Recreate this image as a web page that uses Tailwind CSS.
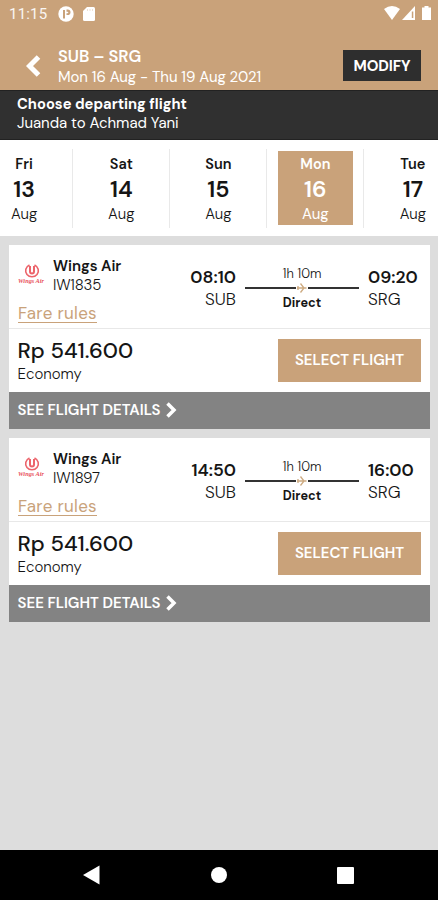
<!DOCTYPE html>
<html lang="en">
<head>
<meta charset="utf-8">
<title>Choose departing flight</title>
<script src="https://cdn.jsdelivr.net/npm/@tailwindcss/browser@4"></script>
</head>
<body class="w-[438px] h-[900px] overflow-hidden bg-[#dddddd] font-['DM_Sans','Inter',sans-serif] text-[#151515] flex flex-col whitespace-nowrap">
<header class="h-[90px] shrink-0 bg-[#c9a27a] text-white">
  <div class="h-7 flex items-center pl-[9px] pr-[7px]">
    <span class="font-['Roboto',sans-serif] text-[15px] leading-7 tracking-[0.2px] text-white/90">11:15</span>
    <svg class="ml-[11px] -mt-px size-4" viewBox="0 0 16 16"><circle cx="8" cy="8" r="7.700" fill="#fff"/><path d="M5 12.500V4h2v8.500zM8.500 3.500h1.200a2.800 2.800 0 0 1 0 5.600H8.500V7.300h1a.8.8 0 0 0 0-1.600h-1z" fill="#c9a27a"/></svg>
    <svg class="ml-[9px] -mt-px w-3 h-3.5" viewBox="0 0 12 14"><path d="M4 0h6.500Q12 0 12 1.500v11q0 1.500-1.500 1.500h-9Q0 14 0 12.500V4z" fill="#fff"/><path d="M4.500 2v2M7 2v2M9.500 2v2" stroke="#ead9c8" stroke-width=".8"/></svg>
    <svg class="ml-auto -mt-0.5 w-4 h-3.5" viewBox="0 0 16 14"><path d="M0 3Q8-3 16 3L8 14z" fill="#fff"/></svg>
    <svg class="ml-0.5 -mt-0.5 w-[13px] h-3.5" viewBox="0 0 13 14"><path d="M0 14 13 0v14z" fill="#fff"/><path d="M9.800 5.500h1.500V12H9.800z" fill="#c9a27a"/></svg>
    <svg class="ml-[7px] -mt-0.5 w-[9px] h-3.5" viewBox="0 0 9 14"><path d="M2.500 0h4v1.500H9V14H0V1.500h2.500z" fill="#fff"/></svg>
  </div>
  <div class="flex items-start pl-[26px] pr-[17px] pt-[19px]">
    <svg class="mt-2 w-[15px] h-[22px]" viewBox="0 0 15 22" fill="none" stroke="#fff" stroke-width="5"><path d="M12.500 2 3.500 11l9 9"/></svg>
    <div class="ml-[17px]">
      <h1 class="text-[16.500px] leading-5 font-semibold tracking-[-0.05px]">SUB – SRG</h1>
      <p class="text-[15px] leading-5 tracking-[-0.08px]">Mon 16 Aug - Thu 19 Aug 2021</p>
    </div>
    <button class="ml-auto mt-[3px] w-[78px] h-[31px] pt-px bg-[#2e2e2e] text-[15px] tracking-[-0.1px] font-bold">MODIFY</button>
  </div>
</header>
<section class="h-[50px] shrink-0 bg-[#303030] border-t border-b border-t-[#222] border-b-[#222] text-white pl-[17px] pt-[3px]">
  <h2 class="text-[14.700px] leading-5 font-bold">Choose departing flight</h2>
  <p class="text-[15px] leading-[19px] tracking-[-0.05px]">Juanda to Achmad Yani</p>
</section>
<nav class="h-24 shrink-0 bg-white flex pt-[9px] -ml-6 w-[462px] overflow-hidden text-center">
  <div class="w-[97.200px] h-[79px] shrink-0 border-r border-[#e9e9e9] flex flex-col items-center pt-1"><b class="text-[14.500px] leading-[23px] font-semibold">Fri</b><b class="text-[23px] leading-[27px] font-semibold">13</b><span class="text-[15px] leading-[22px] font-light">Aug</span></div>
  <div class="w-[97.200px] h-[79px] shrink-0 border-r border-[#e9e9e9] flex flex-col items-center pt-1"><b class="text-[14.500px] leading-[23px] font-semibold">Sat</b><b class="text-[23px] leading-[27px] font-semibold">14</b><span class="text-[15px] leading-[22px] font-light">Aug</span></div>
  <div class="w-[97px] h-[79px] shrink-0 border-r border-[#e9e9e9] flex flex-col items-center pt-1"><b class="text-[14.500px] leading-[23px] font-semibold">Sun</b><b class="text-[23px] leading-[27px] font-semibold">15</b><span class="text-[15px] leading-[22px] font-light">Aug</span></div>
  <div class="w-[97px] h-[79px] shrink-0 border-r border-[#e9e9e9] flex justify-center pt-0.5"><div class="w-[75px] h-[74px] bg-[#c9a27a] text-white flex flex-col items-center pt-0.5"><b class="text-[14.500px] leading-[23px] font-semibold">Mon</b><b class="text-[23px] leading-[27px] font-semibold">16</b><span class="text-[15px] leading-[22px]">Aug</span></div></div>
  <div class="w-[97px] h-[79px] shrink-0 flex flex-col items-center pt-1"><b class="text-[14.500px] leading-[23px] font-semibold">Tue</b><b class="text-[23px] leading-[27px] font-semibold">17</b><span class="text-[15px] leading-[22px] font-light">Aug</span></div>
</nav>
<main class="grow flex flex-col gap-[9px] pt-[9px] pl-[9px] pr-2 bg-[#dddddd]">
  <article class="h-[184px] bg-white">
    <div class="h-[84px] border-b border-[#e8e8e8] flex">
      <div class="w-[173px] pl-[9px] pt-3">
        <div class="flex">
          <svg class="mt-[7px] w-[27px] h-[22px] overflow-visible" viewBox="0 0 27 22"><path d="M11.500 1C7.500 3 6.500 7 9 10.500c2.500 3 7.500 3 10 0 2.500-3.500 1.500-7.500-2.500-9.500" stroke="#ec646b" stroke-width="1.600" fill="none"/><path d="M12 2v5.500q0 2 2 2t2-2V2" stroke="#ec646b" stroke-width="2" fill="none"/><text x="0" y="19" textLength="26" lengthAdjust="spacingAndGlyphs" class="font-['Liberation_Serif',serif] text-[6.500px] italic font-bold fill-[#e8505a]">Wings Air</text></svg>
          <div class="ml-2"><h3 class="text-[15px] leading-[19px] font-semibold tracking-[-0.05px]">Wings Air</h3><p class="text-[15px] leading-[18px] font-light tracking-[-0.2px]">IW1835</p></div>
        </div>
        <a class="block w-fit mt-[11px] border-b border-[#c9a27a] text-[#c9a27a] text-[17px] leading-[17px] tracking-[0.3px]">Fare rules</a>
      </div>
      <div class="w-[54px] pt-[21px] text-right"><p class="text-[17.500px] leading-[22px] font-semibold">08:10</p><p class="text-[17px] leading-[22px] font-light">SUB</p></div>
      <div class="ml-[9px] w-[114px] pt-[21px] text-center">
        <p class="text-[13px] leading-4 font-light">1h 10m</p>
        <div class="h-3 flex items-center"><i class="grow h-[1.500px] bg-[#333]"></i><svg class="w-3 h-3" viewBox="0 0 12 12"><path d="M1 6h9.500M4.500 1.500 8 6l-3.500 4.500M2 4v4" stroke="#cdaa80" stroke-width="1.300" fill="none"/></svg><i class="grow h-[1.500px] bg-[#333]"></i></div>
        <p class="text-[12.700px] leading-[17px] font-bold">Direct</p>
      </div>
      <div class="ml-[9px] pt-[21px]"><p class="text-[17.500px] leading-[22px] font-semibold">09:20</p><p class="text-[17px] leading-[22px] font-light">SRG</p></div>
    </div>
    <div class="h-[63px] flex justify-between pl-[8.500px] pr-[9px] pt-2.5">
      <div class="-mt-px"><p class="text-[22px] leading-[26px] font-medium">Rp 541.600</p><p class="text-[15px] leading-5 font-light">Economy</p></div>
      <button class="w-[143px] h-[43px] bg-[#c9a27a] text-white text-[15px] font-semibold">SELECT FLIGHT</button>
    </div>
    <div class="h-[37px] bg-[#838383] text-white flex items-center pl-[8.500px] text-[15px] font-semibold"><span class="-mt-px">SEE FLIGHT DETAILS</span><svg class="ml-[6px] -mt-px w-[11px] h-4" viewBox="0 0 11 16" fill="none" stroke="#fff" stroke-width="3.500"><path d="M1.500 1.500 8 8l-6.500 6.500"/></svg></div>
  </article>
  <article class="h-[184px] bg-white">
    <div class="h-[84px] border-b border-[#e8e8e8] flex">
      <div class="w-[173px] pl-[9px] pt-3">
        <div class="flex">
          <svg class="mt-[7px] w-[27px] h-[22px] overflow-visible" viewBox="0 0 27 22"><path d="M11.500 1C7.500 3 6.500 7 9 10.500c2.500 3 7.500 3 10 0 2.500-3.500 1.500-7.500-2.500-9.500" stroke="#ec646b" stroke-width="1.600" fill="none"/><path d="M12 2v5.500q0 2 2 2t2-2V2" stroke="#ec646b" stroke-width="2" fill="none"/><text x="0" y="19" textLength="26" lengthAdjust="spacingAndGlyphs" class="font-['Liberation_Serif',serif] text-[6.500px] italic font-bold fill-[#e8505a]">Wings Air</text></svg>
          <div class="ml-2"><h3 class="text-[15px] leading-[19px] font-semibold tracking-[-0.05px]">Wings Air</h3><p class="text-[15px] leading-[18px] font-light tracking-[-0.2px]">IW1897</p></div>
        </div>
        <a class="block w-fit mt-[11px] border-b border-[#c9a27a] text-[#c9a27a] text-[17px] leading-[17px] tracking-[0.3px]">Fare rules</a>
      </div>
      <div class="w-[54px] pt-[21px] text-right"><p class="text-[17.500px] leading-[22px] font-semibold">14:50</p><p class="text-[17px] leading-[22px] font-light">SUB</p></div>
      <div class="ml-[9px] w-[114px] pt-[21px] text-center">
        <p class="text-[13px] leading-4 font-light">1h 10m</p>
        <div class="h-3 flex items-center"><i class="grow h-[1.500px] bg-[#333]"></i><svg class="w-3 h-3" viewBox="0 0 12 12"><path d="M1 6h9.500M4.500 1.500 8 6l-3.500 4.500M2 4v4" stroke="#cdaa80" stroke-width="1.300" fill="none"/></svg><i class="grow h-[1.500px] bg-[#333]"></i></div>
        <p class="text-[12.700px] leading-[17px] font-bold">Direct</p>
      </div>
      <div class="ml-[9px] pt-[21px]"><p class="text-[17.500px] leading-[22px] font-semibold">16:00</p><p class="text-[17px] leading-[22px] font-light">SRG</p></div>
    </div>
    <div class="h-[63px] flex justify-between pl-[8.500px] pr-[9px] pt-2.5">
      <div class="-mt-px"><p class="text-[22px] leading-[26px] font-medium">Rp 541.600</p><p class="text-[15px] leading-5 font-light">Economy</p></div>
      <button class="w-[143px] h-[43px] bg-[#c9a27a] text-white text-[15px] font-semibold">SELECT FLIGHT</button>
    </div>
    <div class="h-[37px] bg-[#838383] text-white flex items-center pl-[8.500px] text-[15px] font-semibold"><span class="-mt-px">SEE FLIGHT DETAILS</span><svg class="ml-[6px] -mt-px w-[11px] h-4" viewBox="0 0 11 16" fill="none" stroke="#fff" stroke-width="3.500"><path d="M1.500 1.500 8 8l-6.500 6.500"/></svg></div>
  </article>
</main>
<footer class="h-[50px] shrink-0 bg-black flex items-center pl-[83px]">
  <svg class="w-[17px] h-5" viewBox="0 0 17 20"><path d="M0 10 16.500 0.500v19z" fill="#fff"/></svg>
  <span class="ml-[111px] size-4 rounded-full bg-white"></span>
  <span class="ml-[110px] size-[17px] rounded-[1px] bg-white"></span>
</footer>
</body>
</html>
